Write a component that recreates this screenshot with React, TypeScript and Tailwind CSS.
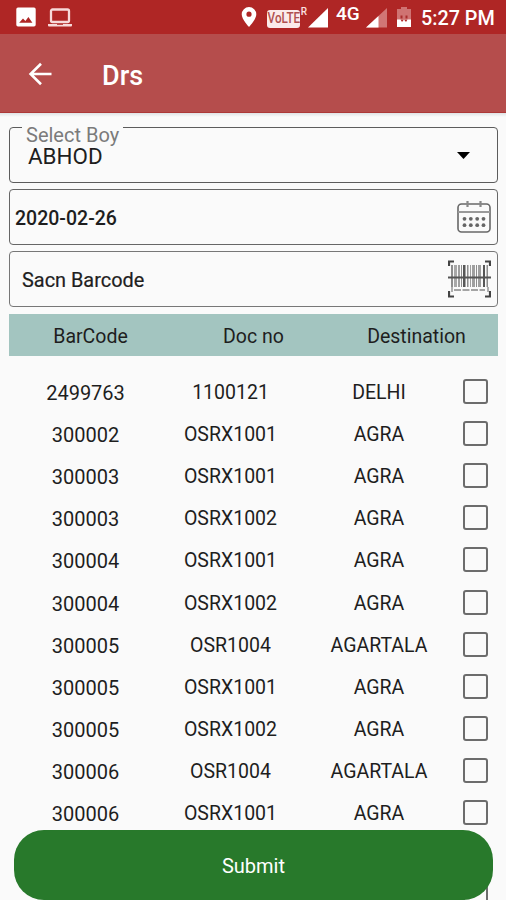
import { useState } from "react";

type DocketRow = {
  barcode: string;
  docNo: string;
  destination: string;
};

const ROWS: DocketRow[] = [
  { barcode: "2499763", docNo: "1100121", destination: "DELHI" },
  { barcode: "300002", docNo: "OSRX1001", destination: "AGRA" },
  { barcode: "300003", docNo: "OSRX1001", destination: "AGRA" },
  { barcode: "300003", docNo: "OSRX1002", destination: "AGRA" },
  { barcode: "300004", docNo: "OSRX1001", destination: "AGRA" },
  { barcode: "300004", docNo: "OSRX1002", destination: "AGRA" },
  { barcode: "300005", docNo: "OSR1004", destination: "AGARTALA" },
  { barcode: "300005", docNo: "OSRX1001", destination: "AGRA" },
  { barcode: "300005", docNo: "OSRX1002", destination: "AGRA" },
  { barcode: "300006", docNo: "OSR1004", destination: "AGARTALA" },
  { barcode: "300006", docNo: "OSRX1001", destination: "AGRA" },
  { barcode: "", docNo: "", destination: "" },
  { barcode: "", docNo: "", destination: "" }
];

// x offset, width and opacity of each bar in the barcode icon
const BARS = [
  [3, 2, 0.6],
  [6, 3, 0.45],
  [10, 2, 0.5],
  [13, 1, 0.6],
  [15, 2.5, 0.9],
  [19, 1.5, 0.6],
  [22, 1, 0.5],
  [24, 3, 0.5],
  [28, 1, 0.6],
  [30, 3, 0.5],
  [35, 2, 0.9],
  [38.5, 1.5, 0.6]
];

function StatusBar() {
  return (
    <div className="flex h-[34px] items-center bg-[#af2625] text-white">
      <svg className="ml-4 h-5 w-5" viewBox="0 0 20 20">
        <path
          fill="#fff"
          fillRule="evenodd"
          d="M2 .5h16a1.7 1.7 0 0 1 1.7 1.7v15.6a1.7 1.7 0 0 1-1.7 1.7H2a1.7 1.7 0 0 1-1.7-1.7V2.2A1.7 1.7 0 0 1 2 .5ZM3.2 15.8h13.2l-4-5.8-3 4-2.4-2.4Z"
        />
      </svg>
      <svg className="ml-[11px] h-5 w-[26px]" viewBox="0 0 26 20">
        <rect x="4" y="2.5" width="18" height="12.5" rx="1.5" fill="none" stroke="#f7d9d9" strokeWidth="2.3" />
        <path d="M1 17h24v1.400a1 1 0 0 1-1 1H2a1 1 0 0 1-1-1Z" fill="#f7d9d9" />
        <path d="M10 17.300h6" stroke="#af2625" strokeWidth="1" />
      </svg>
      <svg className="ml-[168px] h-5 w-4" viewBox="0 0 16 20">
        <path
          fill="#fff"
          fillRule="evenodd"
          d="M8 0a7.3 7.3 0 0 1 7.3 7.3C15.300 12.500 8 20 8 20S.7 12.500.7 7.300A7.300 7.300 0 0 1 8 0Zm0 4.600a2.600 2.600 0 1 0 0 5.200 2.600 2.600 0 0 0 0-5.200Z"
        />
      </svg>
      <div className="relative ml-[10px] mt-[3px] flex h-[18px] w-[33px] shrink-0 items-center justify-center rounded-[3px] bg-[#fbeaea]">
        <span className="scale-x-[0.78] text-[15px] font-medium leading-none text-[#b0514f]">VoLTE</span>
        <span className="absolute -right-[7px] -top-[3px] text-[10px] font-medium leading-none text-[#fbe0e0]">R</span>
      </div>
      <svg className="ml-2 mt-px h-5 w-5" viewBox="0 0 20 20">
        <path d="M20 0V19.500H0Z" fill="#fff" />
      </svg>
      <span className="-mt-[8px] ml-2 w-[24px] whitespace-nowrap text-[19px] font-medium leading-none">4G</span>
      <svg className="ml-[6px] mt-px h-5 w-[21px]" viewBox="0 0 21 20">
        <path d="M21 0V19.500H0Z" fill="#d17675" />
        <path d="M12.500 7.900V19.500H0Z" fill="#fff" />
      </svg>
      <svg className="ml-[10px] h-5 w-[14px]" viewBox="0 0 14 20">
        <path d="M4 0h6v2h4v11H0V2h4Z" fill="#cf7372" />
        <path d="M0 12.500h3.500L5 15l2-2.500L9 15l1.500-2.500H14V20H0Z" fill="#fff" />
        <path d="M3.500 8.500h2v3h-2zM8.500 8.500h2v3h-2z" fill="#a92d2c" />
      </svg>
      <span className="ml-[10px] mt-[3px] whitespace-nowrap text-[19.800px] font-medium leading-none">5:27 PM</span>
    </div>
  );
}

function AppBar() {
  return (
    <div className="flex h-[79px] items-center border-b-[1.500px] border-[#ad3837] bg-[#b54d4c] pt-px text-white">
      <button type="button" aria-label="Back" className="ml-7">
        <svg className="block h-6 w-6" viewBox="0 0 24 24" fill="none" stroke="#fff" strokeWidth="2.600">
          <path d="M23.500 12H3M13 1.800 2.600 12 13 22.200" />
        </svg>
      </button>
      <h1 className="ml-[50px] mt-[5px] text-[27px] font-medium leading-none">Drs</h1>
    </div>
  );
}

function CalendarIcon() {
  return (
    <svg className="h-[34px] w-[34px]" viewBox="0 0 34 34" fill="none" stroke="#686868" strokeWidth="1.600">
      <rect x="1" y="4" width="32" height="28" rx="3.500" />
      <path d="M1 12h32" stroke="#999" strokeWidth="2" />
      <path d="M10.500 1v6M23.500 1v6" stroke="#888" strokeWidth="2.200" />
      {[18.8, 25.2].map((y) =>
        [7.5, 13.8, 20.2, 26.5].map((x) => <circle key={`${x}-${y}`} cx={x} cy={y} r="1.900" fill="#666" stroke="none" />)
      )}
    </svg>
  );
}

function BarcodeIcon() {
  return (
    <svg className="h-[38px] w-[43px]" viewBox="0 0 43 38" fill="none">
      <path d="M1 6V1.500h5M37 1.500h5V6M1 31v5.500h5M37 36.500h5V31" stroke="#444" strokeWidth="2.200" />
      {BARS.map(([x, width, opacity]) => (
        <rect key={x} x={x} y="5" width={width} height="22" fill="#444" opacity={opacity} />
      ))}
      <path d="M4 27v5M40 27v5" stroke="#888" strokeWidth="1.300" />
      <path d="M6 30h31" stroke="#888" strokeWidth="1.600" strokeDasharray="7 1.500" />
      <path d="M0 17.500h43" stroke="#555" strokeWidth="1.800" />
    </svg>
  );
}

export default function App() {
  const [checked, setChecked] = useState<number[]>([]);

  function toggle(index: number) {
    setChecked((prev) => (prev.includes(index) ? prev.filter((i) => i !== index) : [...prev, index]));
  }

  return (
    <div className="relative h-[900px] w-[506px] overflow-hidden bg-[#fafafa] font-['Roboto',sans-serif] text-[#1e1e1e]">
      <StatusBar />
      <AppBar />
      <div className="h-1 bg-gradient-to-b from-[#dfe3e5] to-[#fafafa]" />

      <div className="ml-[9px] mr-2 mt-[10px] space-y-[6px]">
        <div className="relative flex h-14 items-center justify-between rounded-[4px] border-[1.500px] border-[#5c5c5c] pl-[18px] pr-[27px]">
          <span className="absolute -top-[2px] left-3 bg-[#fafafa] px-1 text-[20px] leading-[18px] text-[#7b7b7b]">
            Select Boy
          </span>
          <span className="mt-[3px] text-[22.400px] leading-none">ABHOD</span>
          <svg className="mt-px h-[7px] w-[13px]" viewBox="0 0 13 7">
            <path d="M0 0h13L6.500 7Z" fill="#000" />
          </svg>
        </div>
        <div className="flex h-14 items-center justify-between rounded-[4px] border border-[#666] pl-[5px] pr-[6px]">
          <span className="mt-[3px] text-[19.500px] font-medium leading-5">2020-02-26</span>
          <CalendarIcon />
        </div>
        <div className="flex h-14 items-center justify-between rounded-[4px] border border-[#777] pl-3 pr-[6px]">
          <span className="mt-[3px] text-[19.900px] leading-5 [-webkit-text-stroke:0.2px_#1e1e1e]">Sacn Barcode</span>
          <BarcodeIcon />
        </div>
      </div>

      <div className="ml-[9px] mr-2 mt-[7px] grid h-[42px] grid-cols-3 items-center bg-[#a3c5c0] pt-[3px] text-center text-[19.500px] leading-5">
        <span>BarCode</span>
        <span>Doc no</span>
        <span>Destination</span>
      </div>

      <div className="ml-[13px] mt-[14px]">
        {ROWS.map((row, index) => (
          <div
            key={index}
            className="grid h-[42.200px] grid-cols-[145px_145px_152px_42px] items-center text-center text-[19.500px] leading-5"
          >
            <span className="pt-[3px] text-[20px]">{row.barcode}</span>
            <span className="pt-[3px]">{row.docNo}</span>
            <span className="pt-[3px]">{row.destination}</span>
            <button
              type="button"
              role="checkbox"
              aria-label="Select row"
              aria-checked={checked.includes(index)}
              onClick={() => toggle(index)}
              className={`ml-2 h-[25px] w-[25px] rounded-[3px] border-2 border-[#6c6c6c] ${
                checked.includes(index) ? "bg-[#28792b]" : ""
              }`}
            />
          </div>
        ))}
      </div>

      <button
        type="button"
        className="absolute left-[14px] top-[830px] h-[70px] w-[479px] rounded-[30px] bg-[#28792b] pt-[2px] text-[20px] text-white"
      >
        Submit
      </button>
    </div>
  );
}
